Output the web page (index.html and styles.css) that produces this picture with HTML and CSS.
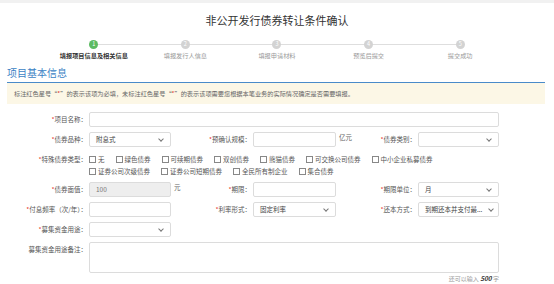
FILE: index.html
```html
<!DOCTYPE html>
<html lang="zh-CN">
<head>
    <meta charset="UTF-8">
    <title>非公开发行债券转让条件确认</title>
    <link rel="stylesheet" href="styles.css">
</head>
<body>
    <div class="topbar"></div>
    <h1 class="page-title">非公开发行债券转让条件确认</h1>

    <div class="steps">
        <div class="step active"><span class="dot">1</span><span class="step-name">填报项目信息及相关信息</span></div>
        <div class="step"><span class="dot">2</span><span class="step-name">填报发行人信息</span></div>
        <div class="step"><span class="dot">3</span><span class="step-name">填报申请材料</span></div>
        <div class="step"><span class="dot">4</span><span class="step-name">预览后提交</span></div>
        <div class="step"><span class="dot">5</span><span class="step-name">提交成功</span></div>
    </div>

    <div class="section">
        <h2 class="section-title">项目基本信息</h2>
        <div class="notice">标注红色星号“<i>*</i>”的表示该项为必填，未标注红色星号“<i>*</i>”的表示该项需要您根据本笔业务的实际情况确定是否需要填报。</div>

        <div class="form">
            <label class="lbl"><i>*</i>项目名称：</label>
            <div class="field span5"></div>

            <label class="lbl"><i>*</i>债券品种：</label>
            <div class="field">附息式<b class="chev"></b></div>
            <label class="lbl"><i>*</i>预确认规模：</label>
            <div class="field"></div>
            <label class="lbl"><span class="unit">亿元</span><span><i>*</i>债券类别：</span></label>
            <div class="field"><b class="chev"></b></div>

            <label class="lbl top"><i>*</i>特殊债券类型：</label>
            <div class="checks span5">
                <div class="check-line">
                    <span class="ck"><b></b>无</span>
                    <span class="ck"><b></b>绿色债券</span>
                    <span class="ck"><b></b>可续期债券</span>
                    <span class="ck"><b></b>双创债券</span>
                    <span class="ck"><b></b>熊猫债券</span>
                    <span class="ck"><b></b>可交换公司债券</span>
                    <span class="ck"><b></b>中小企业私募债券</span>
                </div>
                <div class="check-line">
                    <span class="ck"><b></b>证券公司次级债券</span>
                    <span class="ck"><b></b>证券公司短期债券</span>
                    <span class="ck"><b></b>全民所有制企业</span>
                    <span class="ck"><b></b>集合债券</span>
                </div>
            </div>

            <label class="lbl"><i>*</i>债券面值：</label>
            <div class="field disabled">100</div>
            <label class="lbl"><span class="unit">元</span><span><i>*</i>期限：</span></label>
            <div class="field"></div>
            <label class="lbl"><i>*</i>期限单位：</label>
            <div class="field">月<b class="chev"></b></div>

            <label class="lbl"><i>*</i>付息频率（次/年）：</label>
            <div class="field"></div>
            <label class="lbl"><i>*</i>利率形式：</label>
            <div class="field">固定利率<b class="chev"></b></div>
            <label class="lbl"><i>*</i>还本方式：</label>
            <div class="field tight">到期还本并支付最...<b class="chev"></b></div>

            <label class="lbl"><i>*</i>募集资金用途：</label>
            <div class="field"><b class="chev"></b></div>
            <div class="span4"></div>

            <label class="lbl top">募集资金用途备注：</label>
            <div class="field area span5"></div>

            <div></div>
            <div class="counter span5">还可以输入 <b>500</b> 字</div>
        </div>
    </div>
</body>
</html>
```

FILE: styles.css
```css
body {
    margin: 0;
    font-family: "Noto Sans CJK SC", "Noto Sans", sans-serif;
    color: #333;
    background: #fff;
}
.topbar {
    height: 3px;
    background: #f1f1f1;
}
.page-title {
    margin: 10px 0 0;
    text-align: center;
    font-size: 11px;
    line-height: 14px;
    font-weight: normal;
    color: #333;
}

/* steps */
.steps {
    width: 458px;
    margin: 13px auto 0;
    display: grid;
    grid-template-columns: repeat(5, 1fr);
}
.step {
    position: relative;
    display: flex;
    flex-direction: column;
    align-items: center;
}
.step:not(:first-child)::before {
    content: '';
    position: absolute;
    top: 4px;
    right: 50%;
    width: 100%;
    height: 1px;
    background: #dedede;
}
.dot {
    position: relative;
    z-index: 1;
    width: 9px;
    height: 9px;
    border-radius: 50%;
    background: #d3d3d3;
    color: #fff;
    font-size: 5.5px;
    line-height: 9px;
    text-align: center;
}
.step-name {
    margin-top: 3px;
    font-size: 6.2px;
    line-height: 8px;
    color: #999;
}
.step.active .dot {
    background: #5dbb63;
}
.step.active .step-name {
    color: #333;
    font-weight: bold;
}

/* section */
.section {
    margin: 7px 9px 0 7px;
}
.section-title {
    margin: 0;
    padding-bottom: 3px;
    font-size: 10px;
    line-height: 12px;
    font-weight: normal;
    color: #3b7fc4;
    border-bottom: 1px solid #4a8bc9;
}
.notice {
    height: 21px;
    line-height: 21px;
    padding-left: 7px;
    background: #fcf7e6;
    font-size: 6.2px;
    color: #666;
}
i {
    font-style: normal;
    color: #e5322d;
}

/* form */
.form {
    margin-top: 8px;
    display: grid;
    grid-template-columns: 82px 82px 82px 83px 82px 81px;
    row-gap: 5px;
    font-size: 6.5px;
    line-height: 9px;
}
.lbl {
    display: flex;
    align-items: center;
    justify-content: flex-end;
    padding-right: 2px;
    color: #555;
    white-space: nowrap;
}
.lbl.top {
    align-items: flex-start;
    padding-top: 3px;
}
.lbl .unit {
    margin-right: auto;
    padding-left: 3px;
    color: #666;
    align-self: flex-start;
    padding-top: 1px;
}
.field {
    height: 15px;
    box-sizing: border-box;
    border: 1px solid #dcdcdc;
    border-radius: 2px;
    padding: 0 6px;
    display: flex;
    align-items: center;
    justify-content: space-between;
    color: #444;
    white-space: nowrap;
    overflow: hidden;
}
.field.tight {
    padding-right: 4px;
}
.field.disabled {
    background: #eee;
    color: #777;
}
.field.area {
    height: 31px;
}
.chev {
    flex: none;
    width: 3px;
    height: 3px;
    margin-left: auto;
    margin-right: 1px;
    margin-bottom: 2px;
    border-right: 1px solid #777;
    border-bottom: 1px solid #777;
    transform: rotate(45deg);
}
.span5 {
    grid-column: span 5;
}
.span4 {
    grid-column: span 4;
}
.checks {
    padding-top: 1px;
}
.check-line {
    display: flex;
    height: 12px;
    align-items: center;
}
.ck {
    display: flex;
    align-items: center;
    margin-right: 11px;
    color: #555;
    white-space: nowrap;
}
.ck b {
    width: 5px;
    height: 5px;
    margin-right: 2px;
    border: 1px solid #888;
}
.counter {
    margin-top: -4px;
    text-align: right;
    font-size: 6px;
    line-height: 8px;
    color: #999;
}
.counter b {
    font-style: italic;
    color: #333;
    font-size: 6.5px;
}
```
